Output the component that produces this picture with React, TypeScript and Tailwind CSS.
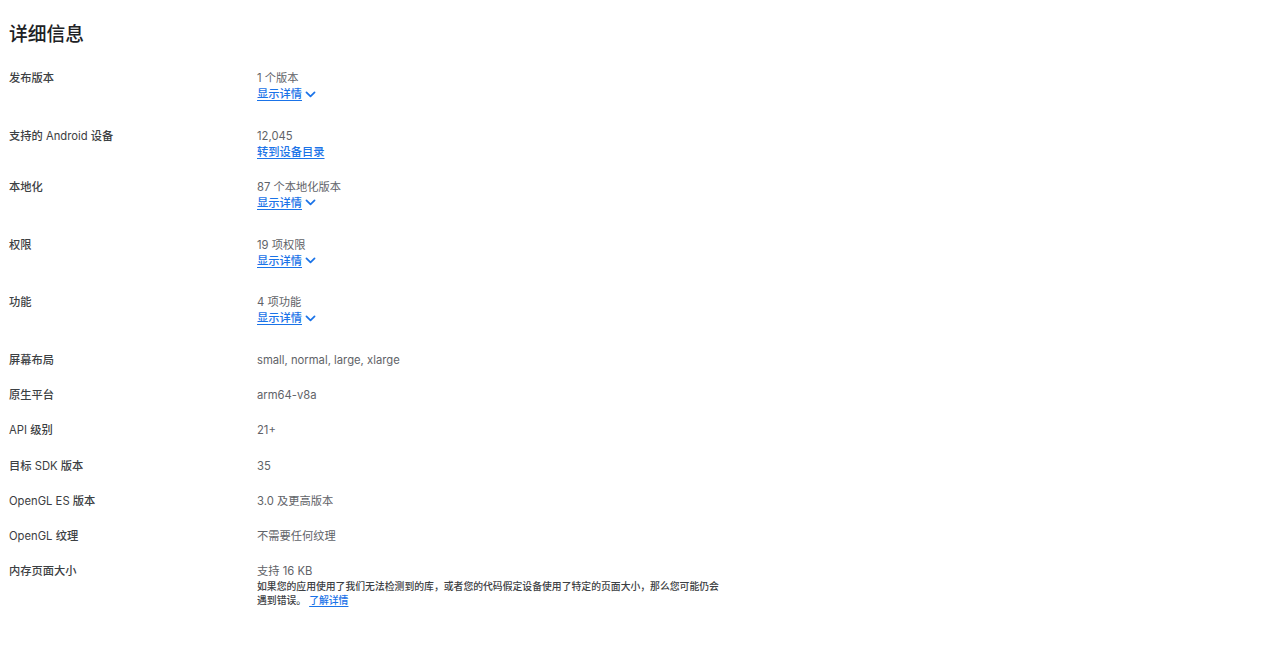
import React from 'react';

const font = { fontFamily: 'Inter, Roboto, "Noto Sans CJK SC", sans-serif' };

const Chevron: React.FC = () => (
  <svg width="13" height="13" viewBox="0 0 24 24" className="ml-[2px] text-[#1a73e8]" fill="none">
    <path d="M4.5 8l7.5 7.5 7.5-7.5" stroke="currentColor" strokeWidth="3.2" strokeLinecap="round" strokeLinejoin="round" />
  </svg>
);

// CJK runs a bit heavier, latin stays regular
const Label: React.FC<{ text: string }> = ({ text }) => {
  const parts = text.split(/([\u4e00-\u9fff]+)/).filter(Boolean);
  return (
    <>
      {parts.map((p, i) =>
        /[\u4e00-\u9fff]/.test(p) ? (
          <span key={i} className="font-medium">{p}</span>
        ) : (
          <span key={i}>{p}</span>
        )
      )}
    </>
  );
};

type Row = {
  label: string;
  value: string;
  link?: string;
  chevron?: boolean;
  note?: boolean;
};

const rows: Row[] = [
  { label: '发布版本', value: '1 个版本', link: '显示详情', chevron: true },
  { label: '支持的 Android 设备', value: '12,045', link: '转到设备目录' },
  { label: '本地化', value: '87 个本地化版本', link: '显示详情', chevron: true },
  { label: '权限', value: '19 项权限', link: '显示详情', chevron: true },
  { label: '功能', value: '4 项功能', link: '显示详情', chevron: true },
  { label: '屏幕布局', value: 'small, normal, large, xlarge' },
  { label: '原生平台', value: 'arm64-v8a' },
  { label: 'API 级别', value: '21+' },
  { label: '目标 SDK 版本', value: '35' },
  { label: 'OpenGL ES 版本', value: '3.0 及更高版本' },
  { label: 'OpenGL 纹理', value: '不需要任何纹理' },
  { label: '内存页面大小', value: '支持 16 KB', note: true },
];

export default function App() {
  return (
    <div className="min-h-screen bg-white pl-[9px] pt-[21px]" style={font}>
      <h2 className="text-[18.75px] leading-[28px] font-medium text-[#202124] mb-[21px]">详细信息</h2>

      <div className="flex flex-col">
        {rows.map((r) => (
          <div key={r.label} className="grid grid-cols-[248px_1fr] pb-[19.2px] text-[11.25px] leading-[16px]">
            <div className="text-[#3c4043]">
              <Label text={r.label} />
            </div>
            <div>
              <div className="text-[#5f6368]">{r.value}</div>
              {r.link && (
                <div className={r.chevron ? 'h-[22.5px]' : ''}>
                  <a href="#" className="inline-flex items-center font-medium text-[#1a73e8]">
                    <span className="underline underline-offset-[2px]">{r.link}</span>
                    {r.chevron && <Chevron />}
                  </a>
                </div>
              )}
              {r.note && (
                <p className="w-[466px] text-[9.84px] leading-[14px] font-medium text-[#3c4043]">
                  如果您的应用使用了我们无法检测到的库，或者您的代码假定设备使用了特定的页面大小，那么您可能仍会遇到错误。
                  <a href="#" className="ml-[3px] text-[#1a73e8] underline underline-offset-[2px]">了解详情</a>
                </p>
              )}
            </div>
          </div>
        ))}
      </div>
    </div>
  );
}
